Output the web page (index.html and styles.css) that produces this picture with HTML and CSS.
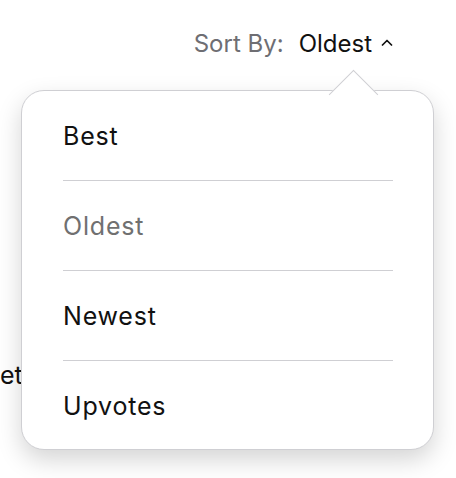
FILE: index.html
```html
<!DOCTYPE html>
<html>
<head>
<meta charset="utf-8">
<link rel="stylesheet" href="styles.css">
</head>
<body>
<div class="page">
  <div class="sortbar">
    <span class="sort-label">Sort By:</span>
    <span class="sort-value">Oldest</span>
    <svg class="chev" width="12" height="7" viewBox="0 0 12 7"><path d="M1.5 6 L6 1.5 L10.5 6" fill="none" stroke="#111" stroke-width="1.7" stroke-linecap="round" stroke-linejoin="round"/></svg>
  </div>
  <div class="behind">et</div>
  <div class="popover">
    <div class="arrow"></div>
    <ul class="menu">
      <li class="item">Best</li>
      <li class="item current">Oldest</li>
      <li class="item">Newest</li>
      <li class="item">Upvotes</li>
    </ul>
  </div>
</div>
</body>
</html>
```
FILE: styles.css
```css
html, body {
  margin: 0;
  padding: 0;
  background: #fff;
}
.page {
  position: relative;
  width: 456px;
  height: 478px;
  overflow: hidden;
  font-family: Inter, "Noto Sans", sans-serif;
  color: #111;
}
.sortbar {
  display: flex;
  justify-content: flex-end;
  align-items: center;
  padding: 29px 63px 0 0;
  height: 29px;
  font-size: 24px;
  line-height: 29px;
}
.sort-label {
  color: #6e6e73;
  margin-right: 15px;
}
.sort-value {
  color: #111;
  margin-right: 9px;
}
.chev {
  display: block;
  margin-top: -2px;
}
.behind {
  padding-top: 302px;
  font-size: 25px;
  line-height: 30px;
  color: #111;
}
.popover {
  position: absolute;
  left: 21px;
  top: 90px;
  width: 411px;
  height: 358px;
  background: #fff;
  border: 1px solid #cfcfd3;
  border-radius: 23px;
  box-shadow: 0 10px 24px rgba(0,0,0,0.17);
}
.arrow {
  position: absolute;
  left: 314px;
  top: -14px;
  width: 34px;
  height: 34px;
  background: #fff;
  border-left: 1px solid #cfcfd3;
  border-top: 1px solid #cfcfd3;
  transform: rotate(45deg);
}
.menu {
  position: relative;
  list-style: none;
  margin: 0;
  padding: 0 40px 0 41px;
}
.item {
  height: 89px;
  display: flex;
  align-items: center;
  font-size: 25px;
  letter-spacing: 0.8px;
  color: #111;
  border-bottom: 1px solid #cfcfd3;
}
.item:last-child {
  border-bottom: none;
}
.item.current {
  color: #707070;
}
```
